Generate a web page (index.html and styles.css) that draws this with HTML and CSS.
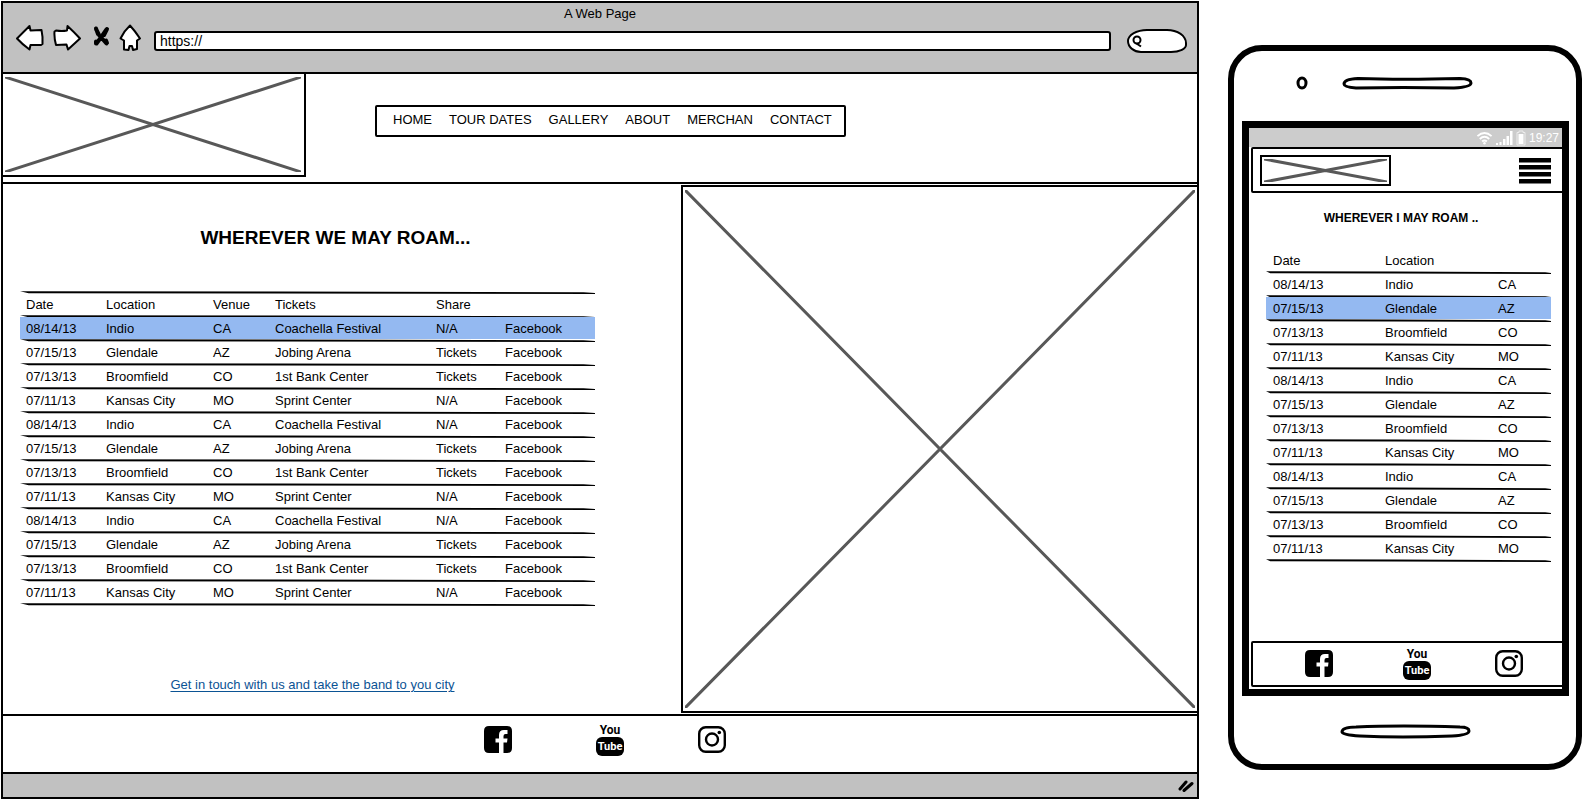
FILE: index.html
```html
<!DOCTYPE html>
<html lang="en">
<head>
<meta charset="utf-8">
<title>A Web Page</title>
<link rel="stylesheet" href="styles.css">
</head>
<body>
<svg class="sprite" aria-hidden="true">
  <symbol id="cross" viewBox="0 0 100 100" preserveAspectRatio="none">
    <path d="M0 0L100 100M100 0L0 100" fill="none" stroke="#585858" stroke-width="3" vector-effect="non-scaling-stroke"/>
  </symbol>
  <symbol id="facebook" viewBox="0 0 28 33">
    <path fill-rule="evenodd" d="M5 3H23Q28 3 28 8V25Q28 30 23 30H19.500V19.500H23L23.500 15.500H19.500V13Q19.500 11 21.500 11H23.500V7H20Q15 7 15 12V15.500H11.500V19.500H15V30H5Q0 30 0 25V8Q0 3 5 3Z"/>
  </symbol>
  <symbol id="instagram" viewBox="0 0 28 33">
    <rect x="1.200" y="4.200" width="25.600" height="24.600" rx="6.500" fill="none" stroke="#000" stroke-width="2.400"/>
    <circle cx="14" cy="16.500" r="6" fill="none" stroke="#000" stroke-width="2.400"/>
    <circle cx="21.300" cy="9.500" r="1.800"/>
  </symbol>
</svg>

<div class="browser">
  <header class="chrome">
    <div class="chrome-title">A Web Page</div>
    <div class="toolbar">
      <button type="button" aria-label="Back"><svg width="30" height="28"><path d="M2 14.500L14.500 2L15.500 6.500L26.500 6Q28 13 27.500 20L26 21H15.500L14.500 25.500Q7 20 2 14.500Z"/></svg></button>
      <button type="button" aria-label="Forward"><svg width="30" height="28"><path d="M1.500 7.500L3 6.500Q9 7.500 14 6.500L14.500 2Q21 8 27 14.500L15 25.500L13.500 20.500L3 21Q1 14 1.500 7.500Z"/></svg></button>
      <button type="button" aria-label="Stop"><svg width="20" height="28"><path class="solid" d="M5 5L8 11L15.500 19.500M5 4.500L7 10M15.500 5.500L11 12L5.500 19.500M16 5L13 11M5 17.500V19.500M15 16.500L16 19"/></svg></button>
      <button type="button" aria-label="Home"><svg width="24" height="28"><path d="M11 1.500Q16 7 21 14.500L18 16.500L18 25L14 26L13 22H10.500L9.500 26L5 25.500V16.500L1.500 14.500Q5 7 11 1.500Z"/></svg></button>
      <input class="url" type="text" value="https://" aria-label="Address">
      <label class="search">
        <svg width="10" height="14" viewBox="0 0 10 14"><circle cx="5" cy="6" r="3.500"/><path d="M4.500 9.500L9 12.500"/></svg>
        <input type="text" aria-label="Search">
      </label>
    </div>
  </header>

  <div class="site-header">
    <div class="placeholder logo"><svg role="img" aria-label="Logo"><use href="#cross"/></svg></div>
    <nav class="nav">
      <a href="#">HOME</a><a href="#">TOUR DATES</a><a href="#">GALLERY</a><a href="#">ABOUT</a><a href="#">MERCHAN</a><a href="#">CONTACT</a>
    </nav>
  </div>

  <main class="content">
    <section class="dates">
      <h1>WHEREVER WE MAY ROAM...</h1>
      <table class="tour tour-full">
        <colgroup><col class="col-date"><col class="col-location"><col class="col-venue"><col class="col-tickets"><col class="col-share"><col></colgroup>
        <thead><tr><th>Date</th><th>Location</th><th>Venue</th><th>Tickets</th><th>Share</th><th></th></tr></thead>
        <tbody>
          <tr class="selected"><td>08/14/13</td><td>Indio</td><td>CA</td><td>Coachella Festival</td><td>N/A</td><td>Facebook</td></tr>
          <tr><td>07/15/13</td><td>Glendale</td><td>AZ</td><td>Jobing Arena</td><td>Tickets</td><td>Facebook</td></tr>
          <tr><td>07/13/13</td><td>Broomfield</td><td>CO</td><td>1st Bank Center</td><td>Tickets</td><td>Facebook</td></tr>
          <tr><td>07/11/13</td><td>Kansas City</td><td>MO</td><td>Sprint Center</td><td>N/A</td><td>Facebook</td></tr>
          <tr><td>08/14/13</td><td>Indio</td><td>CA</td><td>Coachella Festival</td><td>N/A</td><td>Facebook</td></tr>
          <tr><td>07/15/13</td><td>Glendale</td><td>AZ</td><td>Jobing Arena</td><td>Tickets</td><td>Facebook</td></tr>
          <tr><td>07/13/13</td><td>Broomfield</td><td>CO</td><td>1st Bank Center</td><td>Tickets</td><td>Facebook</td></tr>
          <tr><td>07/11/13</td><td>Kansas City</td><td>MO</td><td>Sprint Center</td><td>N/A</td><td>Facebook</td></tr>
          <tr><td>08/14/13</td><td>Indio</td><td>CA</td><td>Coachella Festival</td><td>N/A</td><td>Facebook</td></tr>
          <tr><td>07/15/13</td><td>Glendale</td><td>AZ</td><td>Jobing Arena</td><td>Tickets</td><td>Facebook</td></tr>
          <tr><td>07/13/13</td><td>Broomfield</td><td>CO</td><td>1st Bank Center</td><td>Tickets</td><td>Facebook</td></tr>
          <tr><td>07/11/13</td><td>Kansas City</td><td>MO</td><td>Sprint Center</td><td>N/A</td><td>Facebook</td></tr>
        </tbody>
      </table>
      <p class="contact"><a href="#">Get in touch with us and take the band to you city</a></p>
    </section>
    <div class="placeholder photo"><svg role="img" aria-label="Photo"><use href="#cross"/></svg></div>
  </main>

  <footer class="social">
    <a href="#" aria-label="Facebook"><svg width="28" height="33"><use href="#facebook"/></svg></a>
    <a href="#" class="youtube" aria-label="YouTube"><span class="you">You</span><span class="tube">Tube</span></a>
    <a href="#" aria-label="Instagram"><svg width="28" height="33"><use href="#instagram"/></svg></a>
  </footer>
  <div class="statusbar">
    <svg width="16" height="13"><path d="M2 10L8 3M6 11.500L14 4.500" fill="none" stroke="#000" stroke-width="3" stroke-linecap="round"/></svg>
  </div>
</div>

<div class="phone">
  <div class="phone-top">
    <svg width="12" height="14"><ellipse cx="6" cy="7" rx="4" ry="5" fill="none" stroke="#000" stroke-width="3"/></svg>
    <svg width="131" height="15"><path d="M2 8Q2 3 16 2.500Q60 4 118 2.500Q129 3 129 7Q129 11 112 12Q60 11 14 12Q2 11 2 8Z" fill="none" stroke="#000" stroke-width="3"/></svg>
  </div>
  <div class="screen">
    <div class="phone-status">
      <svg width="17" height="14" viewBox="0 0 18 14"><path d="M1.500 5Q9-1.500 16.500 5M4 8Q9 3.500 14 8M6.500 10.700Q9 8.500 11.500 10.700" fill="none" stroke="#fff" stroke-width="2"/><circle cx="9" cy="12.500" r="1.300" fill="#fff"/></svg>
      <svg width="17" height="14" viewBox="0 0 17 14"><path d="M0 12h2v2H0zM3.500 11h2v3h-2zM7 8h2.500v6H7zM10.500 5H13v9h-2.500zM14 0h2.500v14H14z" fill="#fff"/></svg>
      <svg width="10" height="16" viewBox="0 0 10 16"><path d="M3 1h4v1.500h2V15H1V2.500h2z" fill="none" stroke="#ececec"/><path d="M2.500 4h5v10h-5z" fill="#fff"/></svg>
      <span>19:27</span>
    </div>
    <div class="phone-header">
      <div class="placeholder phone-logo"><svg role="img" aria-label="Logo"><use href="#cross"/></svg></div>
      <button type="button" class="menu" aria-label="Menu"><svg width="32" height="26"><path d="M0 0h32v4.500H0zM0 7h32v4.500H0zM0 14h32v4.500H0zM0 21h32v4.500H0z"/></svg></button>
    </div>
    <div class="phone-body">
      <h2>WHEREVER I MAY ROAM ..</h2>
      <table class="tour tour-compact">
        <colgroup><col class="col-day"><col class="col-city"><col></colgroup>
        <thead><tr><th>Date</th><th>Location</th><th></th></tr></thead>
        <tbody>
          <tr><td>08/14/13</td><td>Indio</td><td>CA</td></tr>
          <tr class="selected"><td>07/15/13</td><td>Glendale</td><td>AZ</td></tr>
          <tr><td>07/13/13</td><td>Broomfield</td><td>CO</td></tr>
          <tr><td>07/11/13</td><td>Kansas City</td><td>MO</td></tr>
          <tr><td>08/14/13</td><td>Indio</td><td>CA</td></tr>
          <tr><td>07/15/13</td><td>Glendale</td><td>AZ</td></tr>
          <tr><td>07/13/13</td><td>Broomfield</td><td>CO</td></tr>
          <tr><td>07/11/13</td><td>Kansas City</td><td>MO</td></tr>
          <tr><td>08/14/13</td><td>Indio</td><td>CA</td></tr>
          <tr><td>07/15/13</td><td>Glendale</td><td>AZ</td></tr>
          <tr><td>07/13/13</td><td>Broomfield</td><td>CO</td></tr>
          <tr><td>07/11/13</td><td>Kansas City</td><td>MO</td></tr>
        </tbody>
      </table>
    </div>
    <div class="phone-social">
      <a href="#" aria-label="Facebook"><svg width="28" height="33"><use href="#facebook"/></svg></a>
      <a href="#" class="youtube" aria-label="YouTube"><span class="you">You</span><span class="tube">Tube</span></a>
      <a href="#" aria-label="Instagram"><svg width="28" height="33"><use href="#instagram"/></svg></a>
    </div>
  </div>
  <div class="phone-bottom">
    <svg width="131" height="15"><path d="M2 8Q2 3 16 3Q60 1 120 3Q129 3 129 7Q129 11 112 12Q60 14 20 12Q2 11 2 8Z" fill="none" stroke="#000" stroke-width="3"/></svg>
  </div>
</div>
</body>
</html>
```
FILE: styles.css
```css
:root {
  --ink: #000;
  --chrome: #c1c1c1;
  --rule: url("data:image/svg+xml,%3Csvg xmlns='http://www.w3.org/2000/svg' viewBox='0 0 100 24' preserveAspectRatio='none'%3E%3Cpath d='M0 .3L45 .6L98 1.200L100 2V3L45 2.500L1.500 2.200Z'/%3E%3C/svg%3E");
}

* { box-sizing: border-box; }

body {
  margin: 0;
  padding: 1px;
  display: grid;
  grid-template-columns: 1198fr 354fr;
  column-gap: 29px;
  align-items: start;
  background: #fff;
  color: var(--ink);
  font: 13px/20px "Liberation Sans", Arial, sans-serif;
}

svg { display: block; }
.sprite { position: absolute; width: 0; height: 0; }

button {
  padding: 0;
  border: 0;
  background: none;
}

input { font: inherit; color: inherit; }

/* Browser window */
.browser { border: 2px solid var(--ink); }

.chrome {
  padding-top: 1px;
  background: var(--chrome);
  border-bottom: 2px solid var(--ink);
}

.chrome-title { text-align: center; }

.toolbar {
  display: flex;
  align-items: center;
  gap: 8px;
  padding: 0 10px 14px 12px;
}

.toolbar button { padding-bottom: 6px; }

.toolbar button path {
  fill: #fff;
  stroke: var(--ink);
  stroke-width: 2;
  stroke-linejoin: round;
}

.toolbar button .solid { fill: none; stroke-width: 4; stroke-linecap: round; }

.url {
  flex: 1;
  min-width: 0;
  height: 20px;
  margin: 0 8px 0 3px;
  padding: 0 4px;
  border: 2px solid var(--ink);
  border-radius: 3px;
  background: #fff;
  font-size: 14px;
}

.search {
  display: flex;
  align-items: center;
  width: 60px;
  height: 24px;
  padding-left: 3px;
  border: 2px solid var(--ink);
  border-radius: 20px 20px 16px 14px / 12px 14px 8px 12px;
  background: #fff;
}

.search svg { flex: none; fill: none; stroke: var(--ink); stroke-width: 2; }

.search input {
  width: 36px;
  padding: 0;
  border: 0;
  background: none;
}

.search input:focus, .url:focus { outline: none; }

/* Site header */
.site-header {
  display: flex;
  align-items: center;
  padding-bottom: 5px;
  border-bottom: 2px solid var(--ink);
}

.placeholder { border: 2px solid var(--ink); }
.placeholder svg { width: 100%; height: 100%; }

.logo {
  width: 303px;
  height: 103px;
  padding: 3px 3px 3px 2px;
  border-width: 0 2px 2px 0;
}

.nav {
  display: flex;
  gap: 17px;
  margin: 0 0 9px 69px;
  padding: 4px 12px 6px 16px;
  border: 2px solid var(--ink);
  border-radius: 2px;
}

.nav a { color: inherit; text-decoration: none; line-height: 18px; }

/* Tour dates */
.content {
  display: grid;
  grid-template-columns: 678fr 516fr;
  border-bottom: 2px solid var(--ink);
}

.dates { padding: 42px 86px 19px 17px; }

h1, h2 { margin: 0; text-align: center; }

h1 {
  padding-left: 56px;
  font-size: 19px;
  line-height: 24px;
}

.tour {
  width: 100%;
  padding-bottom: 1px;
  border-spacing: 0;
  table-layout: fixed;
  background: var(--rule) 0 0 / 100% 24px;
}

.tour-full { margin-top: 41px; }

.tour th, .tour td {
  height: 24px;
  padding: 0 0 0 7px;
  text-align: left;
  font-weight: normal;
  white-space: nowrap;
}

.tour-full th, .tour-full td { padding-left: 6px; }
.tour-full th { height: 26px; padding-top: 2px; }

.tour .selected { background: linear-gradient(#94b9f1, #94b9f1) 0 0 / 100% 22px no-repeat; }

.tour-compact { background-position: 0 22px; }
.tour-compact thead tr { background: linear-gradient(#fff, #fff) 0 0 / 100% 20px no-repeat; }

.col-date { width: 80px; }
.col-location { width: 107px; }
.col-venue { width: 62px; }
.col-tickets { width: 161px; }
.col-share { width: 69px; }
.col-day { width: 112px; }
.col-city { width: 113px; }

.contact {
  margin: 69px 0 0;
  padding-left: 10px;
  text-align: center;
}

.contact a { color: #0b5394; text-underline-offset: 2px; }

.photo {
  margin: 1px 0;
  padding: 3px 2px;
  border-right: 0;
  min-height: 0;
  display: grid;
}

/* Footer */
.social {
  display: grid;
  grid-template-columns: 112px 102px 28px;
  justify-content: center;
  padding: 7px 0 16px 10px;
  border-bottom: 2px solid var(--ink);
}

.youtube {
  display: block;
  width: 28px;
  color: var(--ink);
  font-family: Roboto, "Liberation Sans", sans-serif;
  font-weight: bold;
  text-align: center;
  text-decoration: none;
}

.you {
  display: block;
  font-size: 12px;
  line-height: 14px;
}

.tube {
  display: block;
  border-radius: 6px;
  background: var(--ink);
  color: #fff;
  font-size: 11px;
  line-height: 19px;
}

.statusbar {
  display: flex;
  justify-content: flex-end;
  padding: 5px 3px;
  background: var(--chrome);
}

/* Phone */
.phone {
  margin-top: 44px;
  padding: 0 7px 0 8px;
  border: 6px solid var(--ink);
  border-radius: 34px;
}

.phone-top {
  display: flex;
  gap: 34px;
  padding: 25px 0 30px 54px;
}

.screen {
  padding-bottom: 2px;
  border: 7px solid var(--ink);
}

.phone-status {
  display: flex;
  align-items: center;
  justify-content: flex-end;
  gap: 3px;
  height: 19px;
  padding-right: 3px;
  background: #ccc;
  color: #fff;
  font-size: 12px;
}

.phone-header, .phone-social {
  margin: 0 -2px 0 2px;
  border: 2px solid var(--ink);
  border-radius: 2px;
  background: #fff;
}

.phone-header {
  display: flex;
  align-items: center;
  justify-content: space-between;
  padding: 6px 11px 5px 7px;
}

.phone-logo {
  width: 131px;
  height: 31px;
  padding: 2px;
}

.phone-body { padding: 17px 11px 0 17px; }

h2 {
  margin-bottom: 23px;
  padding-right: 15px;
  font-size: 12px;
  line-height: 16px;
}

.phone-social {
  display: grid;
  grid-template-columns: 98px 92px 28px;
  margin-top: 79px;
  padding: 4px 0 5px 52px;
}

.phone-bottom {
  display: flex;
  justify-content: center;
  padding: 28px 0 25px;
}
```
